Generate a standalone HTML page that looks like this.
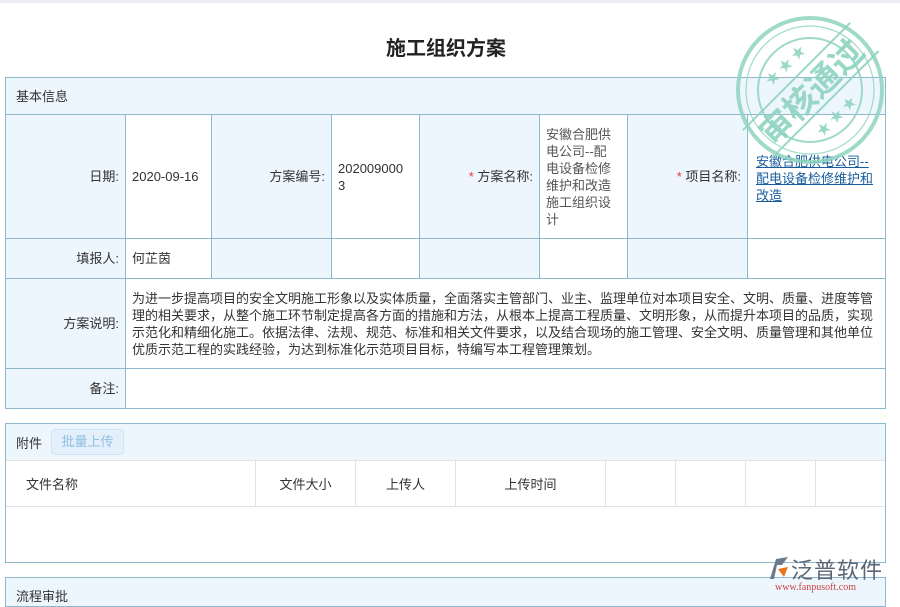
<!DOCTYPE html>
<html><head><meta charset="utf-8"><style>
*{margin:0;padding:0;box-sizing:border-box}
body{width:900px;height:600px;overflow:hidden;background:#fff;font-family:"Liberation Sans","Noto Sans CJK SC",sans-serif;font-size:13px;color:#333;position:relative}
.a{position:absolute}
.c{position:absolute;border-right:1px solid #8fb8cc;border-bottom:1px solid #8fb8cc;display:flex;align-items:center;padding:0 6px;line-height:17px}
.l{background:#eef6fd;justify-content:flex-end;text-align:right}
.v{background:#fff}
.r{color:#e33}
.t{position:absolute;border-right:1px solid #e2e2e2;height:45px;top:461px;display:flex;align-items:center;justify-content:center}
</style></head><body>
<div class="a" style="left:0;top:0;width:900px;height:3px;background:#e9edf1"></div>
<div class="a" style="left:0;top:32px;width:892px;text-align:center;font-size:20px;font-weight:bold;color:#222">施工组织方案</div>

<div class="a" style="left:5px;top:77px;width:881px;height:332px;border:1px solid #8fb8cc;border-right:none;border-bottom:none"></div>
<div class="c l" style="left:6px;top:78px;width:880px;height:37px;justify-content:flex-start;padding-left:10px">基本信息</div>

<div class="c l" style="left:6px;top:115px;width:120px;height:124px">日期:</div>
<div class="c v" style="left:126px;top:115px;width:86px;height:124px">2020-09-16</div>
<div class="c l" style="left:212px;top:115px;width:120px;height:124px">方案编号:</div>
<div class="c v" style="left:332px;top:115px;width:88px;height:124px">202009000<br>3</div>
<div class="c l" style="left:420px;top:115px;width:120px;height:124px"><span class="r">*</span>&nbsp;方案名称:</div>
<div class="c v" style="left:540px;top:115px;width:88px;height:124px;padding-right:14px;color:#555">安徽合肥供电公司--配电设备检修维护和改造施工组织设计</div>
<div class="c l" style="left:628px;top:115px;width:120px;height:124px"><span class="r">*</span>&nbsp;项目名称:</div>
<div class="c v" style="left:748px;top:115px;width:138px;height:124px;color:#1a5d9e;text-decoration:underline;align-items:flex-start;padding-top:38px;padding-left:8px">安徽合肥供电公司--配电设备检修维护和改造</div>

<div class="c l" style="left:6px;top:239px;width:120px;height:40px">填报人:</div>
<div class="c v" style="left:126px;top:239px;width:86px;height:40px">何芷茵</div>
<div class="c l" style="left:212px;top:239px;width:120px;height:40px"></div>
<div class="c v" style="left:332px;top:239px;width:88px;height:40px"></div>
<div class="c l" style="left:420px;top:239px;width:120px;height:40px"></div>
<div class="c v" style="left:540px;top:239px;width:88px;height:40px"></div>
<div class="c l" style="left:628px;top:239px;width:120px;height:40px"></div>
<div class="c v" style="left:748px;top:239px;width:138px;height:40px"></div>

<div class="c l" style="left:6px;top:279px;width:120px;height:90px">方案说明:</div>
<div class="c v" style="left:126px;top:279px;width:760px;height:90px">为进一步提高项目的安全文明施工形象以及实体质量，全面落实主管部门、业主、监理单位对本项目安全、文明、质量、进度等管理的相关要求，从整个施工环节制定提高各方面的措施和方法，从根本上提高工程质量、文明形象，从而提升本项目的品质，实现示范化和精细化施工。依据法律、法规、规范、标准和相关文件要求，以及结合现场的施工管理、安全文明、质量管理和其他单位优质示范工程的实践经验，为达到标准化示范项目目标，特编写本工程管理策划。</div>
<div class="c l" style="left:6px;top:369px;width:120px;height:40px">备注:</div>
<div class="c v" style="left:126px;top:369px;width:760px;height:40px"></div>

<div class="a" style="left:5px;top:423px;width:881px;height:140px;border:1px solid #8fb8cc"></div>
<div class="a" style="left:6px;top:424px;width:879px;height:37px;background:#eef6fd;border-bottom:1px solid #e2e2e2"></div>
<div class="a" style="left:16px;top:433px">附件</div>
<div class="a" style="left:51px;top:429px;width:73px;height:26px;background:#e3f0fb;border:1px solid #d0e4f4;border-radius:4px;color:#8fbfe0;text-align:center;line-height:24px">批量上传</div>
<div class="a" style="left:6px;top:506px;width:879px;height:1px;background:#e2e2e2"></div>
<div class="t" style="left:6px;width:250px;justify-content:flex-start;padding-left:20px">文件名称</div>
<div class="t" style="left:256px;width:100px">文件大小</div>
<div class="t" style="left:356px;width:100px">上传人</div>
<div class="t" style="left:456px;width:150px">上传时间</div>
<div class="t" style="left:606px;width:70px"></div>
<div class="t" style="left:676px;width:70px"></div>
<div class="t" style="left:746px;width:70px"></div>

<div class="a" style="left:5px;top:577px;width:881px;height:30px;border:1px solid #8fb8cc;background:#eef6fd"></div>
<div class="a" style="left:16px;top:586px">流程审批</div>

<svg class="a" style="left:730px;top:12px" width="160" height="160" viewBox="0 0 160 160">
<g fill="none" stroke="#8fd4c0" opacity="0.85">
<circle cx="80" cy="78" r="72" stroke-width="4"/>
<circle cx="80" cy="78" r="64" stroke-width="1.2"/>
<circle cx="80" cy="78" r="52" stroke-width="2"/>
</g>
<g transform="rotate(-45 80 78)" fill="#8fd4c0" opacity="0.9">
<rect x="4" y="58" width="152" height="2"/><rect x="4" y="98" width="152" height="2"/>
<text x="80" y="92" text-anchor="middle" font-size="33" font-weight="bold" font-family="Noto Sans CJK SC,sans-serif">审核通过</text>
<text x="80" y="48" text-anchor="middle" font-size="14">★ ★ ★</text>
<text x="80" y="120" text-anchor="middle" font-size="14">★ ★ ★</text>
</g>
</svg>

<svg class="a" style="left:768px;top:555px" width="22" height="26" viewBox="0 0 22 26"><path d="M2 24 L8 4 L20 2 L14 10 L9 10 L6 24Z" fill="#6b7a8c"/><path d="M10 14 L20 12 L16 22Z" fill="#e8741e"/></svg>
<div class="a" style="left:791px;top:553px;font-size:22px;color:#5a6676;letter-spacing:1px">泛普软件</div>
<div class="a" style="left:775px;top:582px;font-size:10px;color:#c44;font-family:'Liberation Serif',serif">www.fanpusoft.com</div>
</body></html>
